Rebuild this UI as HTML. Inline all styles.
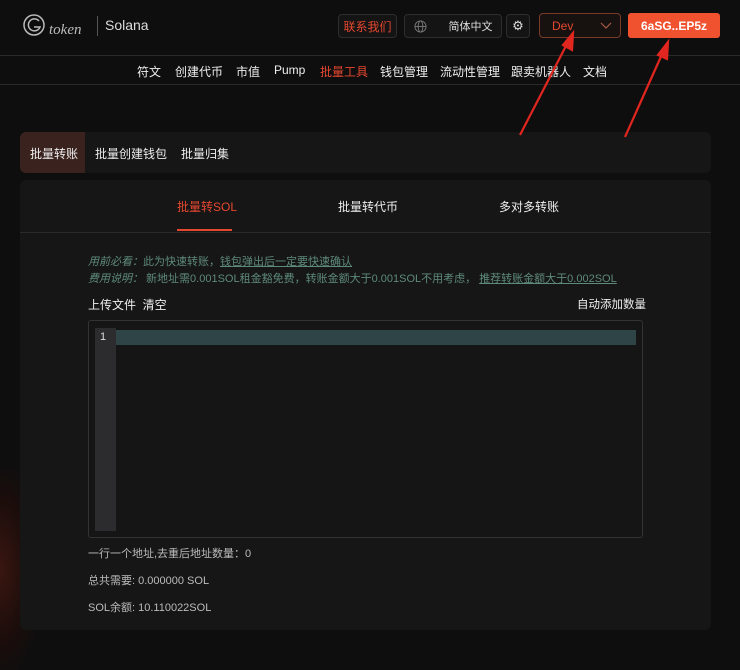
<!DOCTYPE html><html><head><meta charset="utf-8"><style>
*{margin:0;padding:0;box-sizing:border-box}
body{width:740px;height:620px;overflow:hidden;background:#0e0e0e;font-family:"Liberation Sans","Noto Sans CJK SC",sans-serif;color:#e6e6e6;position:relative;font-size:12px}
.a{position:absolute}
.glow{left:-40px;top:470px;width:80px;height:200px;background:radial-gradient(ellipse at center,#3a1610 0%,rgba(40,12,8,0.5) 50%,rgba(0,0,0,0) 80%)}
.hr{left:0;width:740px;height:1px;background:#2a2a2a}
.btn{border:1px solid #2e2e2e;border-radius:4px;background:#141414;display:flex;align-items:center;justify-content:center}
.nav{top:63px;font-size:12px;color:#eee;white-space:nowrap}
.card{background:#161616;border-radius:6px}
</style></head><body>
<div class="a glow"></div>
<svg class="a" style="left:22px;top:12px" width="70" height="28" viewBox="0 0 70 28"><circle cx="12" cy="13" r="10" fill="none" stroke="#bbb" stroke-width="1.5"/><path d="M17 9a6 6 0 1 0 1 6h-6" fill="none" stroke="#bbb" stroke-width="1.5"/><text x="27" y="22" font-family="Liberation Serif" font-style="italic" font-size="15" fill="#bbb">token</text></svg>
<div class="a" style="left:97px;top:16px;width:1px;height:20px;background:#555"></div>
<div class="a" style="left:105px;top:17px;font-size:14px;color:#ddd">Solana</div>
<div class="a btn" style="left:338px;top:14px;width:59px;height:24px;color:#e5472f;font-size:12px">联系我们</div>
<div class="a btn" style="left:404px;top:14px;width:98px;height:24px;font-size:11px;color:#ddd"><svg width="13" height="13" viewBox="0 0 14 14" style="margin-right:22px"><g fill="none" stroke="#777" stroke-width="1"><circle cx="7" cy="7" r="6"/><ellipse cx="7" cy="7" rx="2.5" ry="6"/><line x1="1" y1="7" x2="13" y2="7"/></g></svg>简体中文</div>
<div class="a btn" style="left:506px;top:14px;width:24px;height:24px;color:#ddd;font-size:13px">⚙</div>
<div class="a" style="left:539px;top:13px;width:82px;height:25px;border:1px solid #7a3a2a;border-radius:4px;background:#171210;color:#e5472f;font-size:12px;padding:5px 12px">Dev<svg style="position:absolute;right:8px;top:8px" width="12" height="7" viewBox="0 0 12 7"><path d="M1 1l5 5 5-5" fill="none" stroke="#aa5a48" stroke-width="1.2"/></svg></div>
<div class="a" style="left:628px;top:13px;width:92px;height:25px;background:#f0522f;border-radius:3px;color:#fff;font-weight:bold;font-size:12px;display:flex;align-items:center;justify-content:center">6aSG..EP5z</div>
<div class="a hr" style="top:55px"></div>
<div class="a nav" style="left:137px">符文</div>
<div class="a nav" style="left:175px">创建代币</div>
<div class="a nav" style="left:236px">市值</div>
<div class="a nav" style="left:274px">Pump</div>
<div class="a nav" style="left:320px;color:#e5472f">批量工具</div>
<div class="a nav" style="left:380px">钱包管理</div>
<div class="a nav" style="left:440px">流动性管理</div>
<div class="a nav" style="left:511px">跟卖机器人</div>
<div class="a nav" style="left:583px">文档</div>
<div class="a hr" style="top:84px"></div>
<div class="a card" style="left:20px;top:132px;width:691px;height:41px"></div>
<div class="a" style="left:20px;top:132px;width:65px;height:41px;background:#3a231f;border-radius:6px 0 0 6px"></div>
<div class="a" style="left:30px;top:145px;color:#eee">批量转账</div>
<div class="a" style="left:95px;top:145px;color:#eee">批量创建钱包</div>
<div class="a" style="left:181px;top:145px;color:#eee">批量归集</div>
<div class="a card" style="left:20px;top:180px;width:691px;height:450px"></div>
<div class="a" style="left:177px;top:198px;color:#e5472f">批量转SOL</div>
<div class="a" style="left:177px;top:229px;width:55px;height:2px;background:#e5472f"></div>
<div class="a" style="left:338px;top:198px;color:#eee">批量转代币</div>
<div class="a" style="left:499px;top:198px;color:#eee">多对多转账</div>
<div class="a" style="left:20px;top:232px;width:691px;height:1px;background:#2a2a2a"></div>
<div class="a" style="left:88px;top:253px;font-size:11px;color:#5e8a7c;white-space:nowrap"><i>用前必看：</i>此为快速转账，<u>钱包弹出后一定要快速确认</u></div>
<div class="a" style="left:88px;top:270px;font-size:11px;color:#5e8a7c;white-space:nowrap"><i>费用说明：</i> 新地址需0.001SOL租金豁免费，转账金额大于0.001SOL不用考虑， <u>推荐转账金额大于0.002SOL</u></div>
<div class="a" style="left:88px;top:296px;color:#eee">上传文件&nbsp; 清空</div>
<div class="a" style="left:577px;top:296px;color:#eee;font-size:11.5px">自动添加数量</div>
<div class="a" style="left:88px;top:320px;width:555px;height:218px;border:1px solid #333;border-radius:3px;background:#151515"></div>
<div class="a" style="left:95px;top:328px;width:21px;height:203px;background:#2c2c2e"></div>
<div class="a" style="left:116px;top:330px;width:520px;height:15px;background:#2f4446"></div>
<div class="a" style="left:100px;top:331px;font-size:11px;color:#ddd">1</div>
<div class="a" style="left:88px;top:545px;font-size:11px;color:#bbb">一行一个地址,去重后地址数量：0</div>
<div class="a" style="left:88px;top:572px;font-size:11px;color:#bbb">总共需要: 0.000000 SOL</div>
<div class="a" style="left:88px;top:599px;font-size:11px;color:#bbb">SOL余额: 10.110022SOL</div>
<svg class="a" style="left:0;top:0" width="740" height="620"><g stroke="#e0261f" stroke-width="2.2" fill="#e0261f"><line x1="520" y1="135" x2="568" y2="42"/><path d="M573 33l-1 17-9-5z"/><line x1="625" y1="137" x2="663" y2="52"/><path d="M668 42l-1 17-9-4z"/></g></svg>
</body></html>
